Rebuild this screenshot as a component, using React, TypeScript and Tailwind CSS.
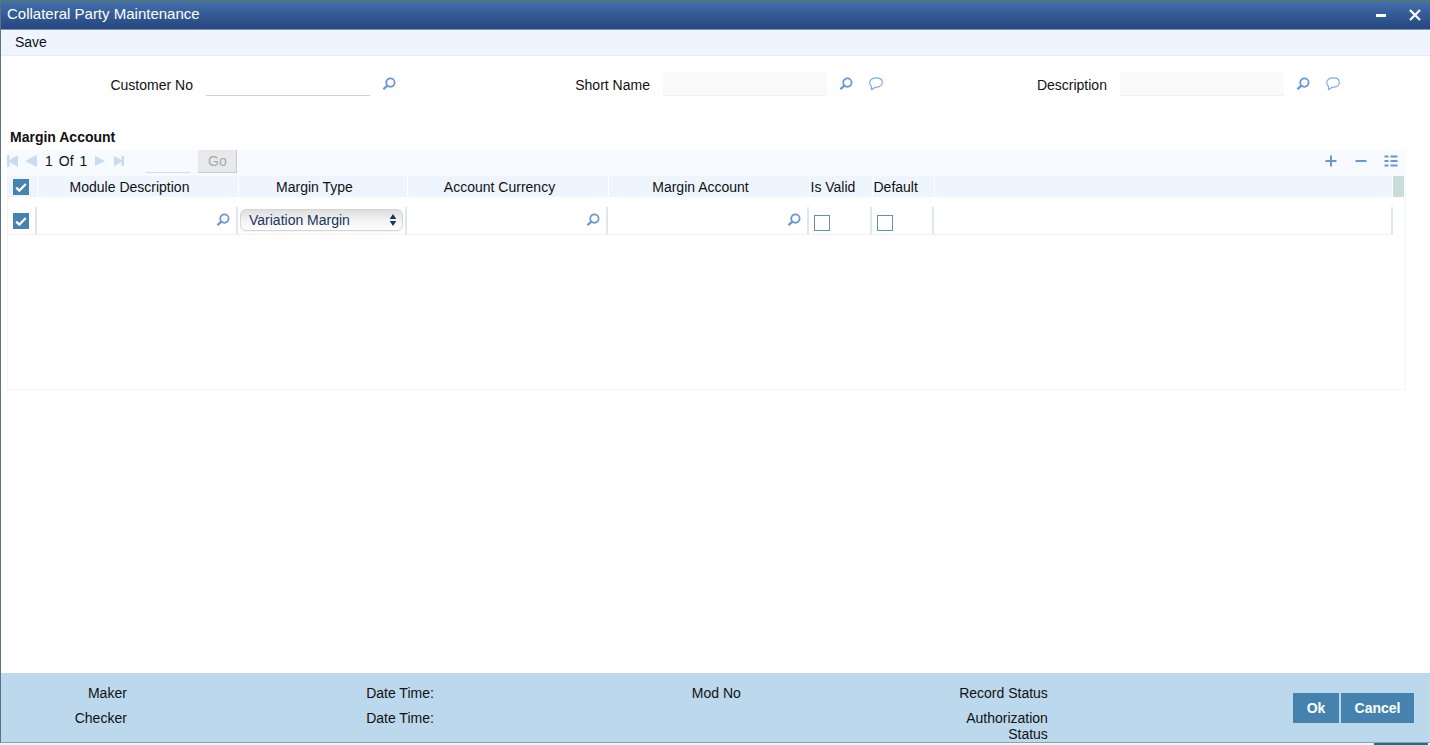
import type { ReactNode } from "react";
import { useState } from "react";

const SearchIcon = () => (
  <svg viewBox="0 0 14 14" className="size-[14px]" fill="none" stroke="#6b96d6" aria-hidden="true">
    <circle cx="8.4" cy="5.6" r="4.2" strokeWidth="1.8" />
    <path d="M5.2 8.8 2 11.6" strokeWidth="2.2" strokeLinecap="round" />
  </svg>
);

const BubbleIcon = () => (
  <svg viewBox="0 0 14 14" className="size-[14px]" fill="none" stroke="#7fabe3" strokeWidth="1.2" aria-hidden="true">
    <path d="M2.4 9.2C1.3 8.3.7 7.1.7 5.7.7 2.9 3.4.9 7.200.9s6.1 1.9 6.1 4.5S10.6 10 7.200 10.2C5.6 10.3 4.2 11.4 2.6 12.7 2.2 11.6 2.6 10.4 2.4 9.2Z" strokeLinejoin="round" />
  </svg>
);

const fields = [
  { id: "customerNo", label: "Customer No", readOnly: false },
  { id: "shortName", label: "Short Name", readOnly: true },
  { id: "description", label: "Description", readOnly: true },
];

const audit = [
  ["Maker", "Checker"],
  ["Date Time:", "Date Time:"],
  ["Mod No", ""],
  ["Record Status", "Authorization Status"],
];

function Check({ label, checked, onChange }: { label: string; checked: boolean; onChange: () => void }) {
  return (
    <span className="relative block size-4">
      <input
        type="checkbox"
        aria-label={label}
        checked={checked}
        onChange={onChange}
        className="block size-4 appearance-none border border-[#5b93bd] bg-white checked:border-[#4583b1] checked:bg-[#4583b1]"
      />
      {checked && (
        <svg viewBox="0 0 16 16" className="pointer-events-none absolute inset-0 size-4" fill="none" stroke="#fff" strokeWidth="2.2" aria-hidden="true">
          <path d="M3.2 8.6 6.3 11.6 12.8 5" />
        </svg>
      )}
    </span>
  );
}

function Cell({ children, className = "" }: { children?: ReactNode; className?: string }) {
  return (
    <td className="p-0 pt-[10px]">
      <div className={`flex h-7 items-center border-r-2 border-b border-r-[#e0e5f0] border-b-[#fbeeed] ${className}`}>{children}</div>
    </td>
  );
}

function HeadCell({ children }: { children: ReactNode }) {
  return (
    <th>
      <div className="pr-4">{children}</div>
    </th>
  );
}

function LookupCell({ label }: { label: string }) {
  return (
    <Cell className="pr-[6px] pb-[2px]">
      <input type="text" aria-label={label} className="h-5 min-w-0 flex-1 px-1 outline-none" />
      <button type="button" aria-label={`Find ${label}`}>
        <SearchIcon />
      </button>
    </Cell>
  );
}

export default function App() {
  const [allSelected, setAllSelected] = useState(true);
  const [selected, setSelected] = useState(true);
  const [valid, setValid] = useState(false);
  const [isDefault, setIsDefault] = useState(false);

  return (
    <div className="flex min-h-screen flex-col bg-white font-['Liberation_Sans',Arial,sans-serif] text-sm leading-4 text-[#111]">
      <div className="flex flex-1 flex-col border-l border-[#5c7480]">
        <header className="flex h-[30px] items-center justify-between border-t-2 border-b border-t-[#4f7580] border-b-[#7f94bb] bg-linear-to-b from-[#426eab] to-[#26467f] pr-2 pl-[6px] text-white">
          <h1 className="pb-1 text-[15px]">Collateral Party Maintenance</h1>
          <div className="flex items-center gap-5 pb-[2px]">
            <button type="button" aria-label="Minimize">
              <svg viewBox="0 0 14 14" className="size-[14px]" fill="none" stroke="#fff" strokeWidth="3">
                <path d="M2 7.5H12" />
              </svg>
            </button>
            <button type="button" aria-label="Close">
              <svg viewBox="0 0 14 14" className="size-[14px]" fill="none" stroke="#fff" strokeWidth="2.2">
                <path d="M2 2 12 12M12 2 2 12" />
              </svg>
            </button>
          </div>
        </header>

        <nav className="flex h-[26px] items-center border-b border-[#e9edf3] bg-[#eef5fe] px-[14px] pb-[2px]">
          <button type="button">Save</button>
        </nav>

        <main className="flex-1">
          <form className="grid grid-cols-3 pt-4 pr-[58px]">
            {fields.map((f) => (
              <div key={f.id} className="flex items-center">
                <label htmlFor={f.id} className="w-[42%] pt-[2px] text-right">{f.label}</label>
                <input
                  id={f.id}
                  type="text"
                  readOnly={f.readOnly}
                  className="ml-[13px] h-6 w-[36%] border-b border-[#d2d2d2] px-1 outline-none read-only:border-[#f0f0f0] read-only:bg-[#fafafa]"
                />
                <button type="button" aria-label={`Find ${f.label}`} className="ml-3">
                  <SearchIcon />
                </button>
                {f.readOnly && (
                  <button type="button" aria-label={`${f.label} details`} className="ml-4">
                    <BubbleIcon />
                  </button>
                )}
              </div>
            ))}
          </form>

          <section className="mt-[33px] mr-6 ml-[6px]">
            <h2 className="px-[3px] font-bold">Margin Account</h2>

            <div className="mt-[5px] flex h-[26px] items-center bg-[#f7fafe] pb-1">
              <button type="button" aria-label="First page">
                <svg viewBox="0 0 12 12" className="size-3" fill="#c9daf2"><path d="M0 0H2.5V5L11 0V12L2.5 7V12H0Z" /></svg>
              </button>
              <button type="button" aria-label="Previous page" className="ml-[6px]">
                <svg viewBox="0 0 12 12" className="size-3" fill="#c9daf2"><path d="M12 0V12L0 6Z" /></svg>
              </button>
              <span className="ml-2 flex gap-[6px]"><span>1</span><span>Of</span><span>1</span></span>
              <button type="button" aria-label="Next page" className="ml-2">
                <svg viewBox="0 0 10 10" className="size-[10px]" fill="#c9daf2"><path d="M0 0V10L10 5Z" /></svg>
              </button>
              <button type="button" aria-label="Last page" className="ml-[9px]">
                <svg viewBox="0 0 10 10" className="size-[10px]" fill="#c9daf2"><path d="M0 0 7.5 4.3V0H10V10H7.5V5.7L0 10Z" /></svg>
              </button>
              <input type="text" aria-label="Page number" className="mt-[3px] ml-[22px] h-5 w-11 border-b border-[#d8dbe0] px-1 outline-none" />
              <button type="button" disabled className="ml-2 h-[23px] w-[39px] border-r border-b border-[#c9cacc] bg-[#e8e9eb] text-[#a9abae]">Go</button>
              <div className="mr-2 ml-auto flex gap-4">
                <button type="button" aria-label="Add row">
                  <svg viewBox="0 0 14 14" className="size-[14px]" stroke="#6b96d6" strokeWidth="2"><path d="M7 1.5V12.5M1.5 7H12.5" /></svg>
                </button>
                <button type="button" aria-label="Delete row">
                  <svg viewBox="0 0 14 14" className="size-[14px]" stroke="#6b96d6" strokeWidth="2"><path d="M1.5 7H12.5" /></svg>
                </button>
                <button type="button" aria-label="Single view">
                  <svg viewBox="0 0 14 14" className="size-[14px]" stroke="#6b96d6" strokeWidth="2">
                    <path d="M.5 2.5H4.5M6.5 2.5H13.5M.5 7H4.5M6.5 7H13.5M.5 11.5H4.5M6.5 11.5H13.5" />
                  </svg>
                </button>
              </div>
            </div>

            <div className="min-h-[214px] border-r border-b border-l border-[#f4f5fa]">
              <table className="w-full table-fixed border-collapse">
                <colgroup>
                  <col className="w-[29px]" />
                  <col className="w-[201px]" />
                  <col className="w-[169px]" />
                  <col className="w-[201px]" />
                  <col className="w-[201px]" />
                  <col className="w-[63px]" />
                  <col className="w-[62px]" />
                  <col />
                  <col className="w-3" />
                </colgroup>
                <thead>
                  <tr className="h-[21px] bg-[#eef5fe] *:border-r *:border-white *:p-0 *:font-normal">
                    <th><div className="flex pl-[5px]"><Check label="Select all rows" checked={allSelected} onChange={() => setAllSelected(!allSelected)} /></div></th>
                    <HeadCell>Module Description</HeadCell>
                    <HeadCell>Margin Type</HeadCell>
                    <HeadCell>Account Currency</HeadCell>
                    <HeadCell>Margin Account</HeadCell>
                    <th className="text-left"><span className="pl-px">Is Valid</span></th>
                    <th className="text-left"><span className="pl-px">Default</span></th>
                    <th></th>
                    <th className="bg-[#c9dcdc]"></th>
                  </tr>
                </thead>
                <tbody>
                  <tr>
                    <Cell className="pl-[5px]"><Check label="Select row" checked={selected} onChange={() => setSelected(!selected)} /></Cell>
                    <LookupCell label="Module Description" />
                    <Cell className="px-[2px] pb-[2px]">
                      <div className="relative w-full">
                        <select aria-label="Margin Type" className="block h-[22px] w-full appearance-none rounded-md border border-[#d5d5d5] bg-linear-to-b from-[#dedede] via-[#f2f2f2] to-white pb-[2px] pl-2 text-sm text-[#17355f] shadow-xs outline-none">
                          <option>Variation Margin</option>
                          <option>Initial Margin</option>
                        </select>
                        <svg viewBox="0 0 8 14" className="pointer-events-none absolute top-1 right-[6px] h-[14px] w-2" fill="#17355f" aria-hidden="true">
                          <path d="M4 1 7.3 6H.7ZM4 13 .7 8H7.3Z" />
                        </svg>
                      </div>
                    </Cell>
                    <LookupCell label="Account Currency" />
                    <LookupCell label="Margin Account" />
                    <Cell className="pt-1 pl-[5px]"><Check label="Is Valid" checked={valid} onChange={() => setValid(!valid)} /></Cell>
                    <Cell className="pt-1 pl-[5px]"><Check label="Default" checked={isDefault} onChange={() => setIsDefault(!isDefault)} /></Cell>
                    <Cell />
                    <td></td>
                  </tr>
                </tbody>
              </table>
            </div>
          </section>
        </main>

        <footer className="flex min-h-[70px] border-b border-[#8aa3b2] bg-[#bcd8ec]">
          <div className="grid flex-1 grid-cols-4">
            {audit.map(([first, second]) => (
              <div key={first} className="w-[41%] pt-3 text-right">
                <p>{first}</p>
                <p className="ml-auto w-min min-w-24 pt-[9px]">{second}</p>
              </div>
            ))}
          </div>
          <div className="flex w-[201px] justify-end gap-[2px] pt-5 pr-4 font-bold text-white">
            <button type="button" className="h-[30px] w-[46px] bg-[#4682b0]">Ok</button>
            <button type="button" className="h-[30px] w-[73px] bg-[#4682b0]">Cancel</button>
          </div>
        </footer>
      </div>
      <div className="flex h-[2px] justify-end bg-[#eef6f9] pr-[2px]">
        <div className="w-[54px] bg-[#1c7285]" />
      </div>
    </div>
  );
}
